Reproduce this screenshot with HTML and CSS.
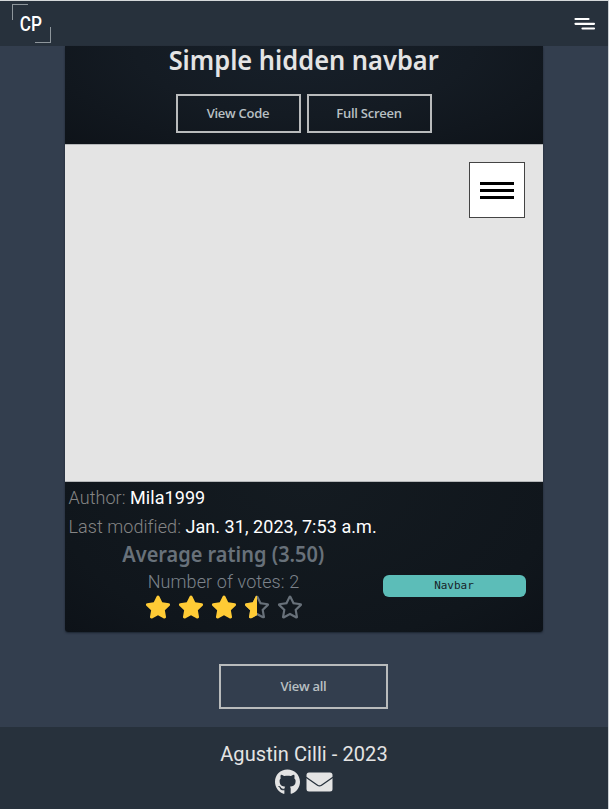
FILE: index.html
```html
<!DOCTYPE html>
<html lang="en">
<head>
<meta charset="utf-8">
<title>Simple hidden navbar</title>
<link rel="stylesheet" href="styles.css">
</head>
<body>
<svg class="defs" aria-hidden="true">
  <symbol id="star" viewBox="0 0 576 512"><path d="M259.3 17.8L194 150.2 47.9 171.5c-26.2 3.8-36.7 36.1-17.7 54.6l105.7 103-25 145.5c-4.5 26.3 23.2 46 46.4 33.7L288 439.6l130.7 68.7c23.2 12.2 50.9-7.4 46.4-33.7l-25-145.5 105.7-103c19-18.5 8.5-50.8-17.7-54.6L382 150.2 316.7 17.8c-11.7-23.6-45.6-23.9-57.4 0z"/></symbol>
  <symbol id="star-line" viewBox="0 0 576 512"><path d="M528.1 171.5L382 150.2 316.7 17.8c-11.7-23.6-45.6-23.9-57.4 0L194 150.2 47.9 171.5c-26.2 3.8-36.7 36.1-17.7 54.6l105.7 103-25 145.5c-4.5 26.3 23.2 46 46.4 33.7L288 439.6l130.7 68.7c23.2 12.2 50.9-7.4 46.4-33.7l-25-145.5 105.7-103c19-18.5 8.5-50.8-17.7-54.6zM388.6 312.3l23.7 138.4L288 385.4l-124.3 65.3 23.7-138.4-100.6-98 139-20.2 62.2-126 62.2 126 139 20.2-100.6 98z"/></symbol>
  <clipPath id="left-half"><rect width="288" height="512"/></clipPath>
</svg>
<div class="page">
  <header class="topbar">
    <div class="logo"><span>CP</span></div>
    <svg class="menu" viewBox="0 0 22 14"><path d="M1.5 2h13M1.5 6.8h18.5M8.5 11.5h11.5"/></svg>
  </header>
  <main class="content">
    <article class="card">
      <div class="card-head">
        <h1><span>Simple hidden navbar</span></h1>
        <div class="actions">
          <a class="btn">View Code</a>
          <a class="btn">Full Screen</a>
        </div>
      </div>
      <div class="preview">
        <div class="burger"><i></i><i></i><i></i></div>
      </div>
      <div class="card-foot">
        <p class="meta">Author: <b>Mila1999</b></p>
        <p class="meta">Last modified: <b>Jan. 31, 2023, 7:53 a.m.</b></p>
        <div class="summary">
          <div class="rating">
            <h2><span>Average rating (3.50)</span></h2>
            <p class="votes">Number of votes: 2</p>
            <div class="stars">
              <svg class="full"><use href="#star"/></svg>
              <svg class="full"><use href="#star"/></svg>
              <svg class="full"><use href="#star"/></svg>
              <svg viewBox="0 0 576 512"><use href="#star-line"/><g class="full" clip-path="url(#left-half)"><use href="#star"/></g></svg>
              <svg><use href="#star-line"/></svg>
            </div>
          </div>
          <div class="tags"><span class="tag">Navbar</span></div>
        </div>
      </div>
    </article>
    <a class="btn view-all">View all</a>
  </main>
  <footer class="footer">
    <p>Agustin Cilli - 2023</p>
    <div class="social">
      <svg class="github" viewBox="0 0 496 512"><path d="M165.9 397.4c0 2-2.3 3.6-5.2 3.6-3.3.3-5.6-1.3-5.6-3.6 0-2 2.3-3.6 5.2-3.6 3-.3 5.6 1.3 5.6 3.6zm-31.1-4.5c-.7 2 1.3 4.3 4.3 4.9 2.6 1 5.6 0 6.2-2s-1.3-4.3-4.3-5.2c-2.6-.7-5.5.3-6.2 2.3zm44.2-1.7c-2.9.7-4.9 2.6-4.6 4.9.3 2 2.9 3.3 5.9 2.6 2.9-.7 4.9-2.6 4.6-4.6-.3-1.9-3-3.2-5.9-2.9zM244.8 8C106.1 8 0 113.3 0 252c0 110.9 69.8 205.8 169.5 239.2 12.8 2.3 17.3-5.6 17.3-12.1 0-6.2-.3-40.4-.3-61.4 0 0-70 15-84.7-29.8 0 0-11.4-29.1-27.8-36.6 0 0-22.9-15.7 1.6-15.4 0 0 24.9 2 38.6 25.8 21.9 38.6 58.6 27.5 72.9 20.9 2.3-16 8.8-27.1 16-33.7-55.9-6.2-112.3-14.3-112.3-110.5 0-27.5 7.6-41.3 23.6-58.9-2.6-6.5-11.1-33.3 2.6-67.9 20.9-6.5 69 27 69 27 20-5.6 41.5-8.5 62.8-8.5s42.8 2.9 62.8 8.5c0 0 48.1-33.6 69-27 13.7 34.7 5.2 61.4 2.6 67.9 16 17.7 25.8 31.5 25.8 58.9 0 96.5-58.9 104.2-114.8 110.5 9.2 7.9 17 22.9 17 46.4 0 33.7-.3 75.4-.3 83.6 0 6.5 4.6 14.4 17.3 12.1C428.2 457.8 496 362.9 496 252 496 113.3 383.5 8 244.8 8z"/></svg>
      <svg class="mail" viewBox="0 0 27 20"><rect x=".5" y=".5" width="26" height="19" rx="2.5"/><path d="M0 5.2L11.5 13.2Q13.5 14.6 15.5 13.2L27 5.2"/></svg>
    </div>
  </footer>
</div>
</body>
</html>
```
FILE: styles.css
```css
* { box-sizing: border-box; }
body, h1, h2, p { margin: 0; }
body { background: #333e4e; font-family: Roboto, sans-serif; }
.defs { position: absolute; width: 0; height: 0; }
.page {
  height: 809px;
  border-top: 1px solid #d5d9da;
  border-right: 1px solid #ccd1d5;
  display: flex;
  flex-direction: column;
}
.topbar {
  height: 45px;
  flex: none;
  background: #27313c;
  display: flex;
  justify-content: space-between;
  padding: 3px 12px 0 12px;
}
.logo {
  width: 39px;
  height: 39px;
  background:
    linear-gradient(#8e969c, #8e969c) 0 0 / 16px 1px,
    linear-gradient(#8e969c, #8e969c) 0 0 / 1px 16px,
    linear-gradient(#8e969c, #8e969c) 100% 100% / 16px 1px,
    linear-gradient(#8e969c, #8e969c) 100% 100% / 1px 16px;
  background-repeat: no-repeat;
  display: flex;
  justify-content: center;
  align-items: center;
  padding-right: 1px;
  color: #fff;
  font-size: 20px;
  font-weight: 500;
}
.logo span { transform: scaleX(.86); }
.menu { width: 22px; height: 14px; margin-top: 13px; fill: none; stroke: #fff; stroke-width: 2.2; stroke-linecap: round; }
.content { flex: 1; display: flex; flex-direction: column; align-items: center; padding-right: 1px; }
.card {
  width: 478px;
  height: 586px;
  border-radius: 0 0 3px 3px;
  box-shadow: 0 1px 2px #1b2430;
}
.card-head { height: 98px; background: radial-gradient(ellipse at 50% 0, #17202a 0, #141b23 50%, #0e1319 100%); }
h1 { height: 48px; text-align: center; color: #e4e4e4; font: 600 26.5px/28px "Noto Sans", sans-serif; }
h1 span { display: inline-block; transform: scaleX(.96); }
.actions { display: flex; justify-content: center; gap: 6px; }
.btn {
  width: 125px;
  height: 39px;
  border: 2px solid #b9bbbc;
  color: #b9c0c3;
  font: 600 13px/35px "Open Sans", sans-serif;
  letter-spacing: -.25px;
  text-align: center;
}
.preview { height: 338px; background: #e4e4e4; border-top: 1px solid #b5b7b9; border-bottom: 1px solid #b5b7b9; padding: 17px 18px; display: flex; justify-content: flex-end; }
.burger { width: 56px; height: 56px; background: #fff; border: 1px solid #444; display: flex; flex-direction: column; align-items: center; justify-content: center; gap: 4px; padding-top: 1px; }
.burger i { width: 34px; height: 3px; background: #000; }
.card-foot { height: 150px; padding-left: 4px; border-radius: 0 0 3px 3px; background: radial-gradient(ellipse at 50% 0, #141b21 0, #10161c 75%, #0d1218 100%); }
.meta { height: 29px; font-size: 18px; font-weight: 300; line-height: 32px; letter-spacing: .06px; color: #858585; white-space: nowrap; }
.meta b { font-weight: 400; color: #fff; }
.summary { display: flex; }
.rating { width: 310px; text-align: center; color: #7c838b; }
h2 { font: 600 21px/29px "Noto Sans", sans-serif; color: #68717a; }
h2 span { display: inline-block; transform: scaleX(.95); }
.votes { font-size: 18px; font-weight: 300; line-height: 26px; letter-spacing: .1px; }
.stars { display: flex; justify-content: center; gap: 7px; }
.stars svg { width: 26px; height: 24px; fill: #68717a; }
.stars .full { fill: #ffcb35; }
.tags { padding: 35px 0 0 4px; }
.tag { display: block; width: 143px; height: 22px; border-radius: 6px; background: #5cbdb8; color: #18242a; text-align: center; font: 11px/22px "DejaVu Sans Mono", monospace; }
.view-all { width: 169px; height: 45px; line-height: 41px; margin-top: 32px; }
.footer { height: 82px; flex: none; background: #27313c; padding-top: 15px; color: #e4e4e4; text-align: center; }
.footer p { font-size: 20px; line-height: 24px; letter-spacing: .08px; }
.social { display: flex; justify-content: center; align-items: center; gap: 6px; margin-top: 3px; }
.github { width: 25px; height: 26px; fill: #e4e4e4; }
.mail { width: 27px; height: 20px; }
.mail rect { fill: #e4e4e4; }
.mail path { fill: none; stroke: #27313c; stroke-width: 1.3; }
```
